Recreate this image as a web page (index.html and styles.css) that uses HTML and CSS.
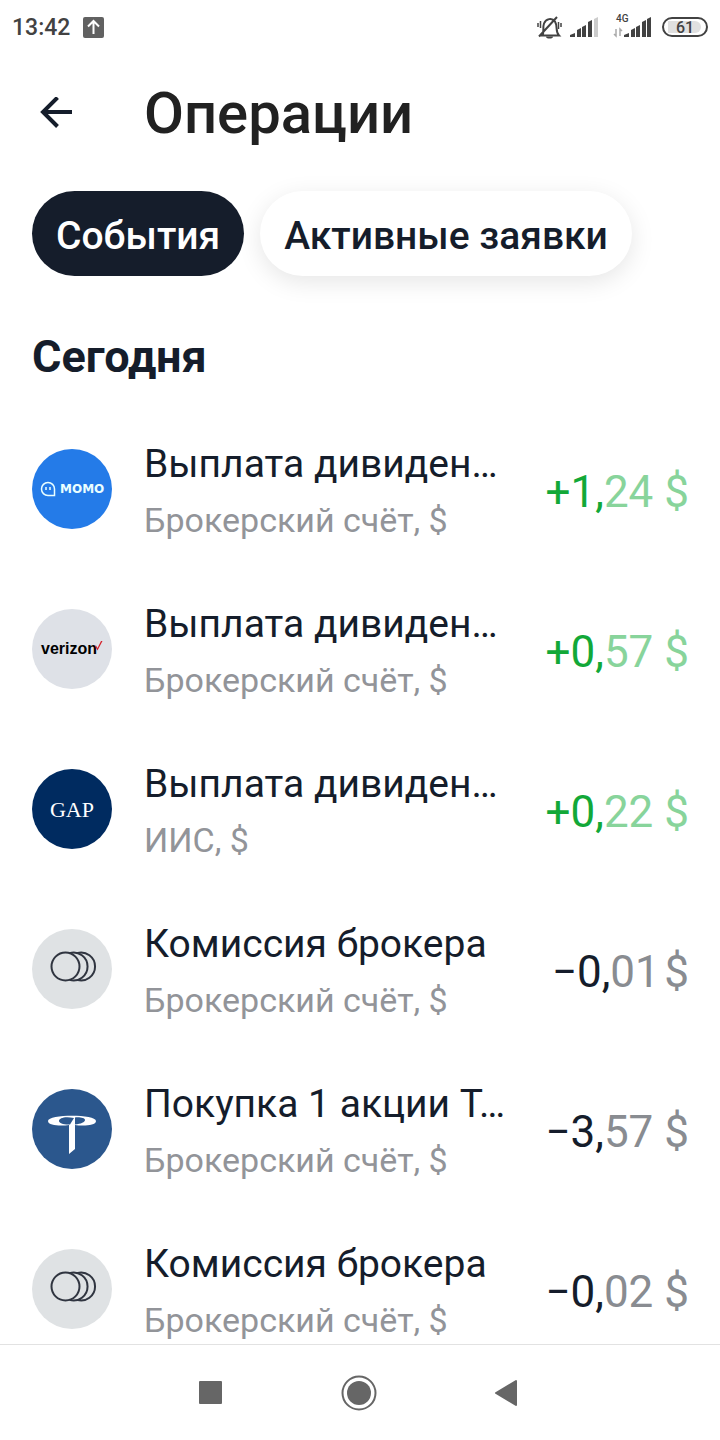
FILE: index.html
```
<!DOCTYPE html>
<html lang="ru">
<head>
<meta charset="utf-8">
<meta name="viewport" content="width=device-width, initial-scale=1">
<title>Операции</title>
<link rel="stylesheet" href="styles.css">
</head>
<body>
<svg class="defs" width="0" height="0" aria-hidden="true">
  <symbol id="coins" viewBox="0 0 80 80">
    <g fill="none" stroke="#303540" stroke-width="2">
      <circle cx="33.500" cy="37.500" r="14"/>
      <path d="M37.500 24.100A14 14 0 1 1 37.500 50.900M45 24.100A14 14 0 1 1 45 50.900"/>
    </g>
  </symbol>
</svg>
<div class="screen">
  <div class="status">
    <span class="clock">13:42</span>
    <svg class="upload" width="22" height="22" viewBox="0 0 22 22" aria-hidden="true"><rect width="21" height="21" rx="2" fill="#616161"/><path d="M10.500 17V5M5 9.500L10.500 4l5.500 5.500" fill="none" stroke="#fff" stroke-width="2"/></svg>
    <svg class="signals" width="176" height="32" viewBox="0 0 176 32" role="img" aria-label="Без звука, сеть 4G, заряд 61 процент">
      <g fill="none" stroke="#424242" stroke-width="2">
        <path d="M10 23.500c3-3 0-7 2-12 2-5 8-6 11-2 3 5 0 10 4 14zM7 24.500L25 5"/>
        <path d="M8.500 9v7M26.500 10v7M6 11v4M29 11v4" stroke-width="1.500"/>
      </g>
      <path d="M14 24.500h7a3.500 2 0 0 1-7 0z" fill="#424242"/>
      <path d="M38 25v-2l5-2v4zM45 18l4-2v9h-4zM50 15l4-2v12h-4zM56 10l4-2v17h-4z" fill="#424242"/>
      <path d="M62 7l4-2v20h-4z" fill="#ccc"/>
      <text class="net" x="84" y="10">4G</text>
      <path d="M84 17v7l-2-2M88 24v-7l2 2" fill="none" stroke="#aaa" stroke-width="1.500"/>
      <path d="M92 25v-2l5-2v4zM99 18l4-2v9h-4zM104 15l4-2v12h-4zM110 10l4-2v17h-4zM115 7l4-2v20h-4z" fill="#424242"/>
      <path d="M136 9h27a6 6 0 0 1 0 12h-27z" fill="#e0e0e0"/>
      <rect x="131" y="6" width="44" height="18" rx="9" fill="none" stroke="#424242" stroke-width="2"/>
      <text class="charge" x="144" y="21">61</text>
    </svg>
  </div>
  <header class="top">
    <button class="back" type="button" aria-label="Назад"><svg width="32" height="32" viewBox="0 0 32 32" aria-hidden="true"><path d="M32 15H3M17.500 .500L3 15l14.500 14.500" fill="none" stroke="#151d2b" stroke-width="4"/></svg></button>
    <h1 class="heading">Операции</h1>
  </header>
  <div class="chips">
    <button class="chip chip-active" type="button" aria-pressed="true">События</button>
    <button class="chip" type="button" aria-pressed="false">Активные заявки</button>
  </div>
  <main class="feed">
    <h2 class="day">Сегодня</h2>
    <ul class="list">
      <li class="row">
        <svg class="logo" viewBox="0 0 80 80" aria-hidden="true"><circle cx="40" cy="40" r="40" fill="#247be8"/><path d="M22 46.500h-6a6.500 6.500 0 1 1 6.500-6.500v6.500z" fill="none" stroke="#eaffff" stroke-width="1.500"/><path d="M14 38v3M18 38v3" stroke="#eaffff" stroke-width="1.500"/><text class="momo" x="28" y="44">MOMO</text></svg>
        <div class="info"><span class="title">Выплата дивиден…</span><span class="account">Брокерский счёт, $</span></div>
        <span class="sum plus">+1,<span class="cents">24 $</span></span>
      </li>
      <li class="row">
        <svg class="logo" viewBox="0 0 80 80" aria-hidden="true"><circle cx="40" cy="40" r="40" fill="#dee1e7"/><text class="verizon" x="9" y="45">verizon</text><path d="M63 37l2.500 4.500L70.500 32h-1.500l-3.500 7-1.500-2.500z" fill="#d5202a"/></svg>
        <div class="info"><span class="title">Выплата дивиден…</span><span class="account">Брокерский счёт, $</span></div>
        <span class="sum plus">+0,<span class="cents">57 $</span></span>
      </li>
      <li class="row">
        <svg class="logo" viewBox="0 0 80 80" aria-hidden="true"><circle cx="40" cy="40" r="40" fill="#002b60"/><text class="gap" x="40" y="48">GAP</text></svg>
        <div class="info"><span class="title">Выплата дивиден…</span><span class="account">ИИС, $</span></div>
        <span class="sum plus">+0,<span class="cents">22 $</span></span>
      </li>
      <li class="row">
        <svg class="logo" viewBox="0 0 80 80" aria-hidden="true"><circle cx="40" cy="40" r="40" fill="#dfe2e4"/><use href="#coins"/></svg>
        <div class="info"><span class="title">Комиссия брокера</span><span class="account">Брокерский счёт, $</span></div>
        <span class="sum">−0,<span class="cents">01&#8202;$</span></span>
      </li>
      <li class="row">
        <svg class="logo" viewBox="0 0 80 80" aria-hidden="true"><circle cx="40" cy="40" r="40" fill="#2b578d"/><path fill-rule="evenodd" d="M16 32C16 25 64 25 64 32 64 37 50 37 43 36V60L37 65V36C30 37 16 37 16 32zM38 35.500L42 29C33 27 27 29 27 32 27 34 32 36 38 35.500zM43 35.500C49 35 53 33 53 31 53 29 48 28 43 28.500z" fill="#fff"/></svg>
        <div class="info"><span class="title">Покупка 1 акции T…</span><span class="account">Брокерский счёт, $</span></div>
        <span class="sum">−3,<span class="cents">57 $</span></span>
      </li>
      <li class="row">
        <svg class="logo" viewBox="0 0 80 80" aria-hidden="true"><circle cx="40" cy="40" r="40" fill="#dfe2e4"/><use href="#coins"/></svg>
        <div class="info"><span class="title">Комиссия брокера</span><span class="account">Брокерский счёт, $</span></div>
        <span class="sum">−0,<span class="cents">02 $</span></span>
      </li>
    </ul>
  </main>
  <nav class="system" aria-label="Системная навигация">
    <button class="key" type="button" aria-label="Недавние"><svg width="36" height="36" viewBox="0 0 36 36"><rect x="6" y="6" width="23" height="23" rx="1" fill="#666"/></svg></button>
    <button class="key" type="button" aria-label="Домой"><svg width="36" height="36" viewBox="0 0 36 36"><circle cx="18" cy="18" r="16.500" fill="none" stroke="#666" stroke-width="2"/><circle cx="18" cy="18" r="12" fill="#666"/></svg></button>
    <button class="key" type="button" aria-label="Назад"><svg width="36" height="36" viewBox="0 0 36 36"><path d="M27 6v24L7 18z" fill="#666" stroke="#666" stroke-width="2" stroke-linejoin="round"/></svg></button>
  </nav>
</div>
</body>
</html>
```
FILE: styles.css
```
* { box-sizing: border-box; }
body { margin: 0; background: #fff; color: #151d2b; font-family: Roboto, "Noto Sans", sans-serif; }
button { border: 0; padding: 0; background: none; color: inherit; font: inherit; }
.defs { position: absolute; }
.screen { display: flex; flex-direction: column; min-height: 100vh; }

.status { display: flex; align-items: center; height: 56px; padding: 0 12px; }
.clock { color: #424242; font-size: 23px; font-weight: 500; line-height: 32px; }
.upload { margin-left: 13px; }
.signals { margin-left: auto; }
.net { font-size: 10px; font-weight: 500; fill: #424242; }
.charge { font-size: 16px; font-weight: 500; fill: #424242; }

.top { display: flex; align-items: center; gap: 72px; height: 112px; padding: 2px 40px 0; }
.back { display: flex; }
.heading { margin: 0; color: #212121; font-size: 58px; font-weight: 500; line-height: 64px; }

.chips { display: flex; gap: 16px; padding: 23px 32px 0; }
.chip { height: 85px; padding: 4px 24px 0; border-radius: 43px; background: #fff; font-size: 39px; font-weight: 500; white-space: nowrap; box-shadow: 0 6px 24px rgba(0, 0, 0, 0.1); }
.chip-active { background: #151d2b; color: #fff; box-shadow: none; }

.feed { flex: 1; padding: 53px 31px 0 32px; }
.day { margin: 0; font-size: 45px; font-weight: 700; line-height: 56px; }
.list { margin: 0; padding: 24px 0 0; list-style: none; }
.row { display: flex; align-items: center; height: 160px; }
/* the last row runs under the navigation bar */
.row:last-child { margin-bottom: -25px; }
.logo { flex: none; width: 80px; height: 80px; margin-right: 32px; }
.info { display: flex; flex: 1; flex-direction: column; gap: 14px; min-width: 0; padding-top: 3px; }
.title { font-size: 39px; line-height: 44px; white-space: nowrap; }
.account { color: #929499; font-size: 34px; line-height: 40px; white-space: nowrap; }
.sum { padding-top: 6px; font-size: 44px; line-height: 52px; white-space: nowrap; }
.cents { color: #898c91; }
.plus { color: #12a838; }
.plus .cents { color: #88d49b; }

.momo { font-family: "DejaVu Sans", sans-serif; font-size: 12px; font-weight: 700; fill: #eaffff; }
.verizon { font-family: "Liberation Sans", sans-serif; font-size: 16px; font-weight: 700; fill: #000; }
.gap { font-family: "Liberation Serif", serif; font-size: 22px; fill: #fff; text-anchor: middle; }

.system { position: sticky; bottom: 0; display: flex; justify-content: center; gap: 112px; height: 96px; padding-right: 2px; border-top: 1px solid #e2e2e2; background: #fff; }
.key { display: flex; align-items: center; }
```
